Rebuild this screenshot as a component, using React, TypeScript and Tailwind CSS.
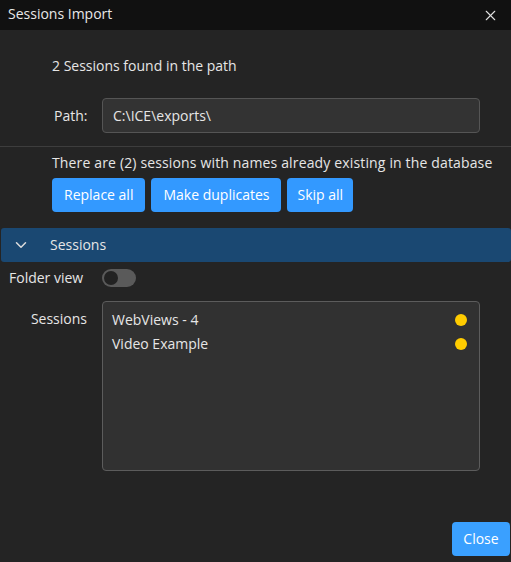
import { ChevronDown, X } from 'lucide-react'

const sessions = ['WebViews - 4', 'Video Example']

export default function App() {
  return (
    <div className="w-[511px] h-[562px] bg-[#242424] text-[#e6e6e6] flex flex-col text-[14px] leading-[18px]" style={{ fontFamily: '"Open Sans", "Noto Sans", sans-serif' }}>
      <div className="h-[30px] bg-[#111111] flex items-center justify-between pl-2 pr-3 shrink-0">
        <span className="text-[14px] text-[#e8e8e8] -mt-[2px]">Sessions Import</span>
        <X size={17} strokeWidth={1.5} className="text-[#e0e0e0]" />
      </div>

      <div className="pl-[52px] pt-[27px] h-[53px]">2 Sessions found in the path</div>

      <div className="flex items-center h-[35px] mt-[15px]">
        <span className="w-[102px] pl-[54px]">Path:</span>
        <div className="w-[378px] h-[35px] rounded border border-[#555] bg-[#333333] flex items-center px-[10px]">C:\ICE\exports\</div>
      </div>

      <div className="border-t border-[#3d3d3d] mt-[13px]" />

      <div className="pl-[52px] mt-[7px] tracking-[0.15px]">There are (2) sessions with names already existing in the database</div>
      <div className="flex gap-[6px] pl-[52px] mt-[6px]">
        <button className="h-[34px] px-[12px] rounded bg-[#3399ff] text-white">Replace all</button>
        <button className="h-[34px] px-[12px] rounded bg-[#3399ff] text-white">Make duplicates</button>
        <button className="h-[34px] px-[10px] rounded bg-[#3399ff] text-white">Skip all</button>
      </div>

      <div className="ml-[1px] mt-[16px] h-[34px] rounded-[3px] bg-[#1a4872] flex items-center">
        <ChevronDown size={18} strokeWidth={2} className="ml-[11px] text-[#ddd]" />
        <span className="ml-[20px]">Sessions</span>
      </div>

      <div className="flex items-center mt-[7px] h-[18px]">
        <span className="w-[102px] pl-[9px]">Folder view</span>
        <div className="w-[34px] h-[18px] rounded-full bg-[#5a5a5a] flex items-center p-[2px]">
          <div className="w-[14px] h-[14px] rounded-full bg-[#222]" />
        </div>
      </div>

      <div className="flex mt-[14px]">
        <span className="w-[102px] pr-[15px] text-right pt-[9px]">Sessions</span>
        <div className="w-[378px] h-[170px] rounded border border-[#5c5c5c] bg-[#313131] pt-[6px] pl-[9px] pr-[12px] flex flex-col">
          {sessions.map((s) => (
            <div key={s} className="flex items-center justify-between h-[24px]">
              <span>{s}</span>
              <span className="w-[12px] h-[12px] rounded-full bg-[#ffcc00]" />
            </div>
          ))}
        </div>
      </div>

      <div className="flex justify-end mt-auto mb-[6px] pr-[1px]">
        <button className="h-[34px] w-[58px] rounded bg-[#3aa0ff] text-white">Close</button>
      </div>
    </div>
  )
}
